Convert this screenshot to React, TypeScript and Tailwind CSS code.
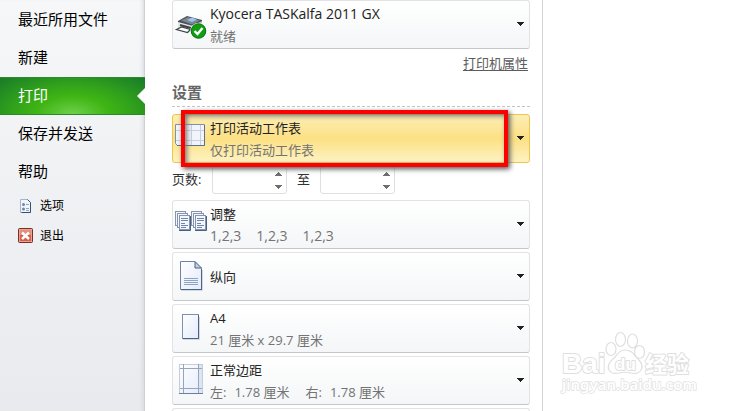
import type { ReactNode } from "react";

const FONT = "font-['Open_Sans','Noto_Sans_CJK_SC',sans-serif]";

function Caret() {
  return (
    <svg width="7" height="4" viewBox="0 0 7 4" className="shrink-0" shapeRendering="crispEdges" aria-hidden="true">
      <path d="M0 0h7v1H0zM1 1h5v1H1zM2 2h3v1H2zM3 3h1v1H3z" fill="#222" />
    </svg>
  );
}

function PrinterIcon() {
  return (
    <svg width="32" height="32" viewBox="-2 -3 32 32" aria-hidden="true">
      <path d="M1 10 10 5l15 4v3l-8 5L1 13z" fill="#4b5157" />
      <path d="M4 9.500 11 6l12 3.500-8 4z" fill="#7d858d" />
      <path d="M10 9l5-2.500 5 2-5 2.500z" fill="#9cc4f5" />
      <path d="M1 11l15 4v6L1 17z" fill="#e4e7ea" />
      <path d="M16 15l9-5v7l-9 5z" fill="#c3c7cb" />
      <path d="M3 14l11 3" stroke="#3c4248" strokeWidth="2" />
      <path d="M-0.500 18.500l5-2.500 9 2.500-3 3z" fill="#fff" stroke="#3c4248" strokeWidth="1.200" />
      <circle cx="21.500" cy="20" r="8.200" fill="#fff" />
      <circle cx="21.500" cy="20" r="7.300" fill="#0f9d14" stroke="#08700c" />
      <path d="M17.500 20l3 3 5-6" fill="none" stroke="#fff" strokeWidth="2.400" />
    </svg>
  );
}

function SheetIcon() {
  return (
    <svg width="32" height="32" viewBox="0 0 32 32" aria-hidden="true">
      <path d="M0.500 2.500h29v21h-27l-2-2z" fill="#f1f4fb" stroke="#8091b0" />
      <path d="M2 23.500h27.500V3" fill="none" stroke="#5d6f8f" />
      <path d="M6.500 3v20M16.500 3v20M25.500 3v20M1 8.500h28M1 18.500h28" stroke="#c8cfe0" />
    </svg>
  );
}

function MiniPage({ x, y }: { x: number; y: number }) {
  return <rect x={x + 0.5} y={y + 0.5} width="10" height="14" fill="#f3f6fc" stroke="#8595b1" />;
}

function CollateIcon() {
  return (
    <svg width="32" height="32" viewBox="0 0 32 32" aria-hidden="true">
      {[0, 16].map((x) => (
        <g key={x}>
          <MiniPage x={x} y={3} />
          <MiniPage x={x + 2} y={5} />
          <MiniPage x={x + 4} y={7} />
          <path d={`M${x + 4} 22.500h11.500V8`} fill="none" stroke="#4c617f" />
          <path d={`M${x + 6} 10.500h7M${x + 6} 12.500h7M${x + 6} 15.500h4M${x + 6} 17.500h7M${x + 6} 19.500h5`} stroke="#6f85aa" />
        </g>
      ))}
    </svg>
  );
}

function PortraitIcon() {
  return (
    <svg width="32" height="32" viewBox="0 0 32 32" aria-hidden="true">
      <defs>
        <linearGradient id="page" x1="0" y1="0" x2="1" y2="1">
          <stop offset="0" stopColor="#fff" />
          <stop offset="1" stopColor="#e3eafa" />
        </linearGradient>
      </defs>
      <path d="M6 30.500h21.500V10" fill="none" stroke="#d5d8de" />
      <path d="M5.500 1.500h14l7 7v21h-21z" fill="url(#page)" stroke="#6f83a8" />
      <path d="M20 1.500v6.500h6.500z" fill="#c2d0ea" stroke="#4c617f" />
      <path d="M26.500 9v20.500H6" fill="none" stroke="#4c6388" />
      <path d="M9 18.500h14M9 20.500h14M9 22.500h14M9 24.500h14" stroke="#8fa3c4" />
    </svg>
  );
}

function PaperIcon() {
  return (
    <svg width="32" height="32" viewBox="0 0 32 32" aria-hidden="true">
      <path d="M8 27.500h16.500V5" fill="none" stroke="#d5d8de" />
      <rect x="7.500" y="2.500" width="16" height="24" fill="url(#page)" stroke="#7d90b0" />
      <path d="M23.500 3v23.500H8" fill="none" stroke="#4c6388" />
    </svg>
  );
}

function MarginsIcon() {
  return (
    <svg width="32" height="32" viewBox="0 0 32 32" aria-hidden="true">
      <rect x="4.500" y="0.500" width="23" height="29" fill="url(#page)" stroke="#c6ccd8" />
      <path d="M23 1h4v28h-4z" fill="#dde4f2" />
      <path d="M8.500 0v30M23.500 0v30M5 4.500h22M5 24.500h22" stroke="#97a4be" />
      <path d="M4 29.500h24" stroke="#6c7f9f" />
    </svg>
  );
}

function OptionsIcon() {
  return (
    <svg width="15" height="16" viewBox="0 0 15 16" aria-hidden="true">
      <path d="M2.500 1.500h7l3 3v10h-10z" fill="#f0f4fb" stroke="#a5b5cd" />
      <path d="M9.500 1.500l3 3v10h-9" fill="none" stroke="#38506f" />
      <circle cx="5.500" cy="6.500" r="1.500" fill="#6f86a8" />
      <circle cx="5.500" cy="11" r="1.500" fill="#6f86a8" />
      <path d="M8 6.500h3M8 10.500h3M8 12.500h3" stroke="#93a5c2" />
    </svg>
  );
}

function ExitIcon() {
  return (
    <svg width="15" height="15" viewBox="0 0 15 15" aria-hidden="true">
      <rect x="0.500" y="0.500" width="14" height="14" rx="1" fill="#d2604a" stroke="#743029" />
      <rect x="1.500" y="1.500" width="12" height="12" fill="none" stroke="#eda393" />
      <path d="M2 2h11v5H2z" fill="#e38d7a" />
      <path d="M4 4.500l7 6.500M11 4.500L4 11" stroke="#fff" strokeWidth="2.500" />
    </svg>
  );
}

function NavItem({ children, active = false }: { children: ReactNode; active?: boolean }) {
  if (active) {
    return (
      <button
        type="button"
        aria-current="page"
        className="relative flex h-[38px] w-full items-center border-y border-[#2b8a2c] bg-[radial-gradient(ellipse_at_50%_100%,#6fd04a_0%,#3fb514_35%,#2f9f1c_62%,#187a2a_100%)] pb-[2px] pl-[18px] text-[15px] text-white"
      >
        {children}
        <svg width="8" height="16" viewBox="0 0 8 16" className="absolute right-0 top-[10px]" aria-hidden="true">
          <path d="M8 0v16L0 8z" fill="#fff" />
        </svg>
      </button>
    );
  }
  return (
    <button type="button" className="flex h-[38px] w-full items-center pb-[2px] pl-[18px] text-[15px] text-black">
      {children}
    </button>
  );
}

function Option({ icon, title, detail, selected = false }: { icon: ReactNode; title?: ReactNode; detail?: ReactNode; selected?: boolean }) {
  const tone = selected
    ? "border-[#f0c64a] bg-linear-to-b from-[#fdeeb5] via-[#fce083] to-[#fdf2c0]"
    : "border-[#e2e3e4] border-b-[#c4c6c8] bg-linear-to-b from-white to-[#f4f6f7]";
  return (
    <button
      type="button"
      aria-haspopup="listbox"
      className={`flex h-[49px] w-full shrink-0 items-center rounded-[3px] border pb-px pl-[2px] pr-[5px] text-left ${tone}`}
    >
      <span className="flex w-[35px] shrink-0">{icon}</span>
      <span className="flex grow flex-col pt-[2px] text-[13px] leading-[22px]">
        <span className="text-[#222]">{title}</span>
        {detail && <span className="text-[#737373]">{detail}</span>}
      </span>
      <Caret />
    </button>
  );
}

function Spinner({ label }: { label: string }) {
  return (
    <span className="flex h-7 w-[75px] rounded-[3px] border border-[#dcdfe4] bg-white">
      <input type="text" aria-label={label} className="w-0 grow bg-transparent pl-1 text-[13px] outline-none" />
      <span className="flex w-4 flex-col">
        <button type="button" aria-label={`${label} +`} className="flex h-[13px] items-center justify-center">
          <svg width="7" height="4" viewBox="0 0 7 4" shapeRendering="crispEdges">
            <path d="M3 0h1v1H3zM2 1h3v1H2zM1 2h5v1H1zM0 3h7v1H0z" fill="#6e6e6e" />
          </svg>
        </button>
        <button type="button" aria-label={`${label} -`} className="flex h-[13px] items-center justify-center">
          <svg width="7" height="4" viewBox="0 0 7 4" shapeRendering="crispEdges">
            <path d="M0 0h7v1H0zM1 1h5v1H1zM2 2h3v1H2zM3 3h1v1H3z" fill="#6e6e6e" />
          </svg>
        </button>
      </span>
    </span>
  );
}

function Watermark() {
  return (
    <svg width="140" height="70" viewBox="0 0 140 70" className="absolute bottom-[11px] right-[36px]" aria-hidden="true">
      <g fill="#fff" stroke="#dfdfdf" strokeWidth="1.200">
        <ellipse cx="54" cy="19" rx="5" ry="6.500" />
        <ellipse cx="63.500" cy="9.500" rx="5" ry="7" />
        <ellipse cx="75.500" cy="11" rx="5" ry="7" />
        <ellipse cx="82.500" cy="22" rx="5" ry="6.500" />
        <path d="M68 20c7 0 9 5 13 9s5 8 3 11-6 4-10 3-8-1-12 0-8 0-10-3 0-8 4-11 5-9 12-9z" />
      </g>
      <g fill="#fff" stroke="#dfdfdf" strokeWidth="2" strokeLinejoin="round" style={{ paintOrder: "stroke" }}>
        <g fontFamily="'Liberation Sans',Arial,sans-serif" fontWeight="700">
          <text x="5" y="43" fontSize="28">Bai</text>
          <text x="58" y="40" fontSize="17">du</text>
        </g>
        <text x="88" y="42" fontSize="22" fontWeight="700" fontFamily="'Noto Sans CJK SC',sans-serif">经验</text>
        <text x="5" y="60" fontSize="15" fontWeight="600" strokeWidth="1.500" fontFamily="'Noto Sans','Open Sans',sans-serif">
          jingyan.baidu.com
        </text>
      </g>
    </svg>
  );
}

export default function App() {
  return (
    <div className={`relative flex h-screen overflow-hidden bg-white ${FONT}`}>
      <nav className="w-[145px] shrink-0 border-r border-[#cfd1d4] bg-linear-to-b from-[#f6f7f9] to-[#e8eaed] shadow-[inset_-4px_0_4px_-3px_#d4d7da]">
        <div className="-mr-px pt-px">
          <NavItem>最近所用文件</NavItem>
          <NavItem>新建</NavItem>
          <NavItem active>打印</NavItem>
          <NavItem>保存并发送</NavItem>
          <NavItem>帮助</NavItem>
          <button type="button" className="flex h-[30px] w-full items-center gap-[7px] pl-[18px] text-xs text-black">
            <OptionsIcon />
            选项
          </button>
          <button type="button" className="flex h-[29px] w-full items-center gap-[7px] pl-[18px] text-xs text-black">
            <ExitIcon />
            退出
          </button>
        </div>
      </nav>

      <main className="flex w-[398px] shrink-0 flex-col border-r border-[#d3d4d6] pl-[27px] pr-3">
        <Option icon={<PrinterIcon />} title={<span className="text-sm leading-[22px]">Kyocera TASKalfa 2011 GX</span>} detail="就绪" />
        <a href="#properties" className="mt-1 mr-[2px] self-end text-[13px] leading-5 text-[#5c5c5c] underline underline-offset-2">
          打印机属性
        </a>
        <h2 className="mt-[7px] h-[27px] shrink-0 border-b border-dashed border-[#c3c5c7] text-[15px] leading-6 font-bold text-[#666]">设置</h2>
        <div className="relative mt-[7px] shrink-0">
          <Option selected icon={<SheetIcon />} title="打印活动工作表" detail="仅打印活动工作表" />
          <span className="pointer-events-none absolute -top-1 left-[9px] right-[22px] h-[57px] border-4 border-[#fe0000] shadow-[2px_2px_5px_#555,inset_2px_2px_5px_#777]" />
        </div>
        <div className="mt-[3px] flex h-7 shrink-0 items-center text-[13px] text-[#333]">
          <span className="w-10">页数:</span>
          <Spinner label="起始页" />
          <span className="w-[33px] text-center">至</span>
          <Spinner label="结束页" />
        </div>
        <div className="mt-[6px] flex flex-col gap-[3px]">
          <Option
            icon={<CollateIcon />}
            title="调整"
            detail={
              <span className="flex gap-[15px] text-sm leading-[22px]">
                <span>1,2,3</span>
                <span>1,2,3</span>
                <span>1,2,3</span>
              </span>
            }
          />
          <Option icon={<PortraitIcon />} title="纵向" />
          <Option icon={<PaperIcon />} title="A4" detail="21 厘米 x 29.7 厘米" />
          <Option
            icon={<MarginsIcon />}
            title="正常边距"
            detail={
              <span className="flex gap-4">
                <span className="flex gap-2"><span>左:</span><span>1.78 厘米</span></span>
                <span className="flex gap-2"><span>右:</span><span>1.78 厘米</span></span>
              </span>
            }
          />
          <Option icon={<PaperIcon />} />
        </div>
      </main>
      <Watermark />
    </div>
  );
}
